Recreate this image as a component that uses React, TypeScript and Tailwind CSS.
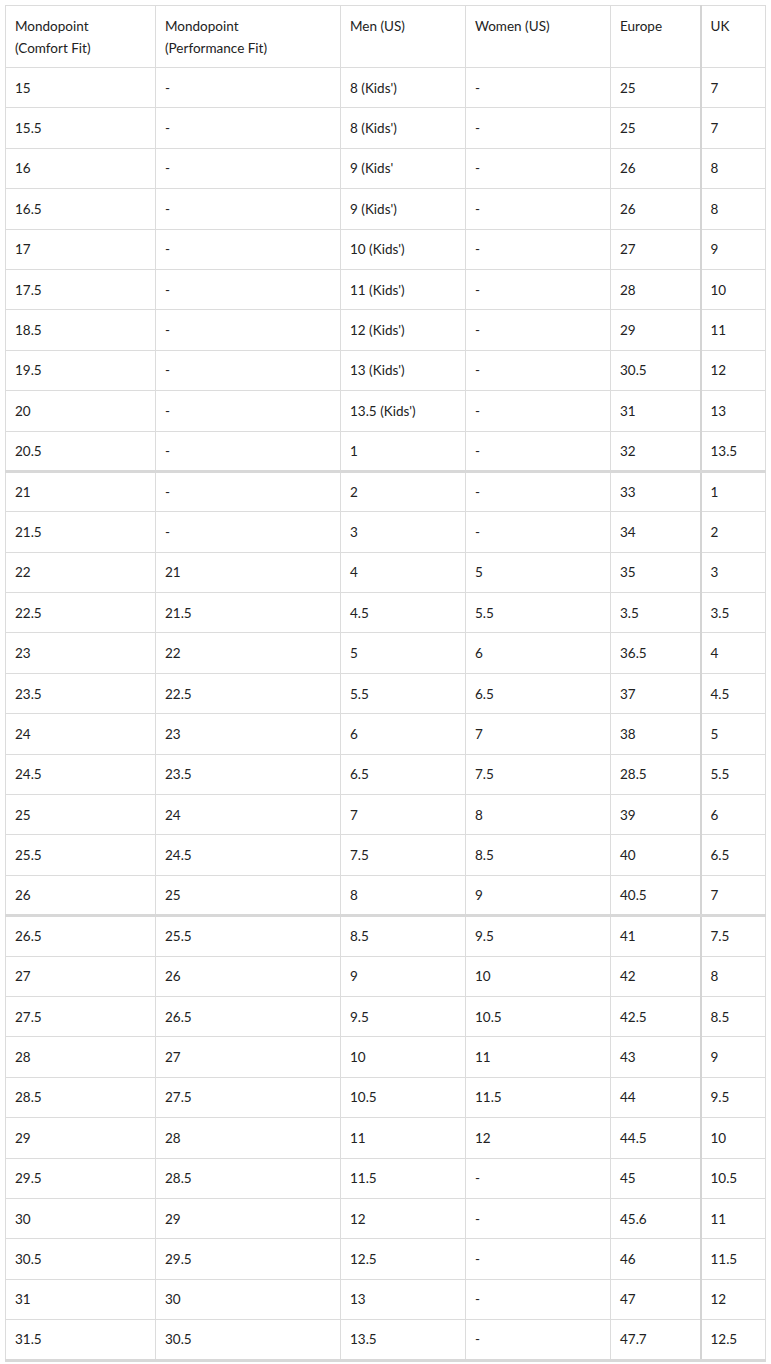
import React from 'react';

type Row = [string, string, string, string, string, string];

const rows: Row[] = [
    ['15', '-', "8 (Kids')", '-', '25', '7'],
    ['15.5', '-', "8 (Kids')", '-', '25', '7'],
    ['16', '-', "9 (Kids'", '-', '26', '8'],
    ['16.5', '-', "9 (Kids')", '-', '26', '8'],
    ['17', '-', "10 (Kids')", '-', '27', '9'],
    ['17.5', '-', "11 (Kids')", '-', '28', '10'],
    ['18.5', '-', "12 (Kids')", '-', '29', '11'],
    ['19.5', '-', "13 (Kids')", '-', '30.5', '12'],
    ['20', '-', "13.5 (Kids')", '-', '31', '13'],
    ['20.5', '-', '1', '-', '32', '13.5'],
    ['21', '-', '2', '-', '33', '1'],
    ['21.5', '-', '3', '-', '34', '2'],
    ['22', '21', '4', '5', '35', '3'],
    ['22.5', '21.5', '4.5', '5.5', '3.5', '3.5'],
    ['23', '22', '5', '6', '36.5', '4'],
    ['23.5', '22.5', '5.5', '6.5', '37', '4.5'],
    ['24', '23', '6', '7', '38', '5'],
    ['24.5', '23.5', '6.5', '7.5', '28.5', '5.5'],
    ['25', '24', '7', '8', '39', '6'],
    ['25.5', '24.5', '7.5', '8.5', '40', '6.5'],
    ['26', '25', '8', '9', '40.5', '7'],
    ['26.5', '25.5', '8.5', '9.5', '41', '7.5'],
    ['27', '26', '9', '10', '42', '8'],
    ['27.5', '26.5', '9.5', '10.5', '42.5', '8.5'],
    ['28', '27', '10', '11', '43', '9'],
    ['28.5', '27.5', '10.5', '11.5', '44', '9.5'],
    ['29', '28', '11', '12', '44.5', '10'],
    ['29.5', '28.5', '11.5', '-', '45', '10.5'],
    ['30', '29', '12', '-', '45.6', '11'],
    ['30.5', '29.5', '12.5', '-', '46', '11.5'],
    ['31', '30', '13', '-', '47', '12'],
    ['31.5', '30.5', '13.5', '-', '47.7', '12.5'],
];

// rows after which the sheet has a heavier rule
const heavy = new Set([9, 20, 31]);

const widths = ['w-[150px]', 'w-[185px]', 'w-[125px]', 'w-[145px]', 'w-[90px]', 'w-[65px]'];

const App: React.FC = () => {
    return (
        <div className="bg-white min-h-screen pt-[5px] pl-[5px] text-[#222] text-[13.5px] font-['Lato','Liberation_Sans',sans-serif]">
            <table className="border-collapse table-fixed w-[760px]">
                <colgroup>
                    {widths.map((w, i) => (
                        <col key={i} className={w} />
                    ))}
                </colgroup>
                <thead>
                    <tr className="h-[62px]">
                        {['Mondopoint (Comfort Fit)', 'Mondopoint (Performance Fit)', 'Men (US)', 'Women (US)', 'Europe', 'UK'].map((h, i) => (
                            <th
                                key={h}
                                className={`align-top text-left font-normal leading-[22px] px-[9px] pt-[9px] border border-[#dcdcdc] ${i === 5 ? 'border-l-2 border-l-[#d4d4d4]' : ''}`}
                            >
                                {h.includes('(') && i < 2 ? (
                                    <>
                                        {h.split(' (')[0]}
                                        <br />({h.split(' (')[1]}
                                    </>
                                ) : (
                                    h
                                )}
                            </th>
                        ))}
                    </tr>
                </thead>
                <tbody>
                    {rows.map((r, ri) => (
                        <tr key={ri} className="h-[40.4px]">
                            {r.map((c, ci) => (
                                <td
                                    key={ci}
                                    className={`align-middle px-[9px] py-0 leading-[20px] border border-[#dcdcdc] ${ci === 5 ? 'border-l-2 border-l-[#d4d4d4]' : ''} ${heavy.has(ri) ? 'border-b-[3px] border-b-[#d8d8d8]' : ''}`}
                                >
                                    {c}
                                </td>
                            ))}
                        </tr>
                    ))}
                </tbody>
            </table>
        </div>
    );
};

export default App;
